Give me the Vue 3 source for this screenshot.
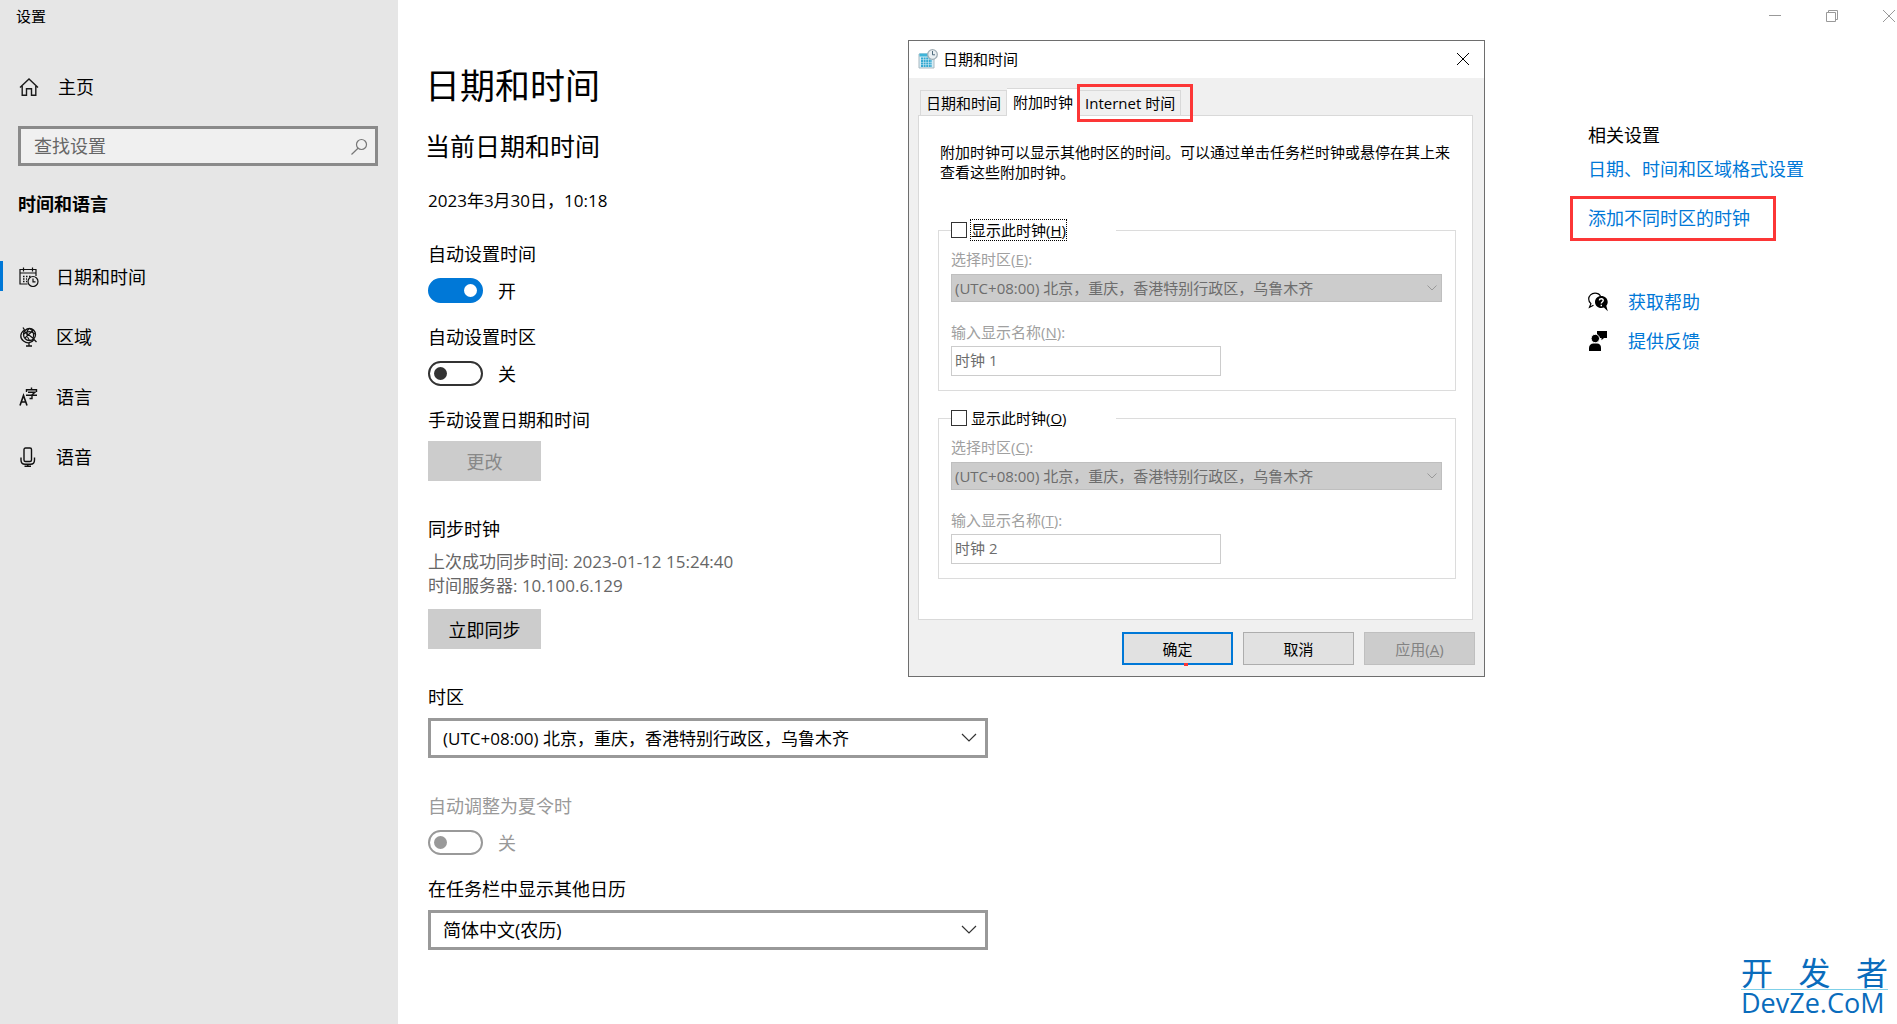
<script setup>
import { ref } from 'vue'

const navItems = [
  { id: 'datetime', label: '日期和时间', active: true },
  { id: 'region', label: '区域', active: false },
  { id: 'language', label: '语言', active: false },
  { id: 'speech', label: '语音', active: false }
]

const zone = '(UTC+08:00) 北京，重庆，香港特别行政区，乌鲁木齐'
const autoTime = ref(true)
const autoZone = ref(false)

const clocks = ref([
  { id: 1, shown: false, showKey: 'H', zoneKey: 'E', nameKey: 'N', name: '时钟 1', focused: true },
  { id: 2, shown: false, showKey: 'O', zoneKey: 'C', nameKey: 'T', name: '时钟 2', focused: false }
])
</script>

<template>
  <div class="window">
    <aside class="sidebar">
      <div class="app-name">设置</div>
      <a class="nav-link home" href="#">
        <svg class="icon" viewBox="0 0 20 20" fill="none" stroke="#1a1a1a" stroke-width="1.4">
          <path d="M1 10.500 10 2l9 8.500M3.200 9v9.300h4.300v-6.500h5v6.500h4.300V9" />
        </svg>
        <span>主页</span>
      </a>
      <div class="search">
        <input type="text" placeholder="查找设置" aria-label="查找设置" />
        <svg class="search-icon" viewBox="0 0 18 18" fill="none" stroke="#777" stroke-width="1.200">
          <circle cx="11.500" cy="6.500" r="5" />
          <path d="M8 10.200 1.500 16.500" />
        </svg>
      </div>
      <h2 class="section-name">时间和语言</h2>
      <nav class="nav">
        <a v-for="item in navItems" :key="item.id" class="nav-link" :class="{ active: item.active }" href="#">
          <svg v-if="item.id === 'datetime'" class="icon" viewBox="0 0 20 20" fill="none" stroke="#111" stroke-width="1.200">
            <path d="M8.500 17H1V2.500h16V9M1 6h16M4.500 .5v4M13.500 .5v4" />
            <path d="M4 9.500h1.500M7 9.500h1.500M10 9.500h1.500M4 12h1.500M7 12h1M4 14.500h1.500M7 14.500h1" stroke-width="1.400" />
            <circle cx="14" cy="14.500" r="5" />
            <path d="M14 11.500v3.300h2.500" />
          </svg>
          <svg v-else-if="item.id === 'region'" class="icon" viewBox="0 0 20 20" fill="none" stroke="#111" stroke-width="1.300">
            <circle cx="10.500" cy="7.500" r="6" />
            <path d="M5.500 4.500 15 12M6 11l8.500-8M10 1.500c-3.500 3.500-3 7 .5 12M11 1.500c4 3 4 6 3 10.500M5 7c3-3 7-3 11 0" stroke-width="1.100" />
            <path d="M4 .5 5.500 3C1 6 .5 11 4.500 14c4 3 8 2 10.500-1.500l2.500 2.500M10 16v3M7 19h6" />
          </svg>
          <svg v-else-if="item.id === 'language'" class="icon" viewBox="0 0 20 20" fill="none" stroke="#111" stroke-width="1.400">
            <path d="M1 18.500 4.500 8.500 8 18.500M2.300 15h4.400" stroke-width="1.600" />
            <path d="M12.500 .5v2M7.500 5V2.700h10V5M9 5.300h7l-3 2.500v3.700h-2.500M7 8.300h11" />
          </svg>
          <svg v-else class="icon" viewBox="0 0 20 20" fill="none" stroke="#111" stroke-width="1.400">
            <rect x="5" y="1" width="7.500" height="13.500" rx="1.500" />
            <path d="M2 10.500V13c0 3 1.500 4.300 4 4.300h5.500c2.500 0 4-1.300 4-4.300v-2.500M8.800 17v2.300M5.500 19.300h6.500" />
          </svg>
          <span>{{ item.label }}</span>
        </a>
      </nav>
    </aside>

    <main class="content">
      <h1>日期和时间</h1>
      <h2>当前日期和时间</h2>
      <p class="now mixed">2023年3月30日，10:18</p>

      <section class="field">
        <label for="auto-time">自动设置时间</label>
        <div class="switch-row">
          <input id="auto-time" v-model="autoTime" class="switch" type="checkbox" />
          <span>{{ autoTime ? '开' : '关' }}</span>
        </div>
      </section>
      <section class="field">
        <label for="auto-zone">自动设置时区</label>
        <div class="switch-row">
          <input id="auto-zone" v-model="autoZone" class="switch" type="checkbox" />
          <span>{{ autoZone ? '开' : '关' }}</span>
        </div>
      </section>
      <section class="field block">
        <label for="manual">手动设置日期和时间</label>
        <button id="manual" class="btn" type="button" disabled>更改</button>
      </section>
      <section class="field sync">
        <h3>同步时钟</h3>
        <p class="info mixed">上次成功同步时间: 2023-01-12 15:24:40<br />时间服务器: 10.100.6.129</p>
        <button class="btn" type="button">立即同步</button>
      </section>
      <section class="field block">
        <label for="zone">时区</label>
        <div class="select mixed">
          <select id="zone"><option>{{ zone }}</option></select>
          <svg viewBox="0 0 16 10" fill="none" stroke="#333" stroke-width="1.200"><path d="M1 1l7 7 7-7" /></svg>
        </div>
      </section>
      <section class="field muted">
        <label for="dst">自动调整为夏令时</label>
        <div class="switch-row">
          <input id="dst" class="switch" type="checkbox" disabled />
          <span>关</span>
        </div>
      </section>
      <section class="field">
        <label for="calendar">在任务栏中显示其他日历</label>
        <div class="select">
          <select id="calendar"><option>简体中文(农历)</option></select>
          <svg viewBox="0 0 16 10" fill="none" stroke="#333" stroke-width="1.200"><path d="M1 1l7 7 7-7" /></svg>
        </div>
      </section>
    </main>

    <aside class="related">
      <h3>相关设置</h3>
      <a href="#">日期、时间和区域格式设置</a>
      <a class="marked" href="#">添加不同时区的时钟</a>
      <a class="support" href="#">
        <svg class="icon" viewBox="0 0 20 20">
          <path d="M7 1.200C3.500 1.200 .7 3.700 .7 7c0 2 .9 3.500 2.200 4.600L1.500 15.200l4-2M12.500 4.200C11.500 2.300 9.500 1.200 7 1.200" fill="none" stroke="#000" stroke-width="1.200" />
          <path d="M13.300 4C9.700 4 7 6.600 7 10s2.700 6 6.300 6c.9 0 1.800-.2 2.600-.5l3.900 3.700-1.500-5.500c.9-1 1.400-2.300 1.400-3.700C19.700 6.600 16.900 4 13.300 4z" fill="#000" />
          <path d="M11.300 8.300c.3-2.200 4-2 3.900.2-.1 1.500-1.900 1.500-1.900 3M13.300 12.800v1.400" fill="none" stroke="#fff" stroke-width="1.400" />
        </svg>
        <span>获取帮助</span>
      </a>
      <a class="support" href="#">
        <svg class="icon" viewBox="0 0 20 20">
          <path d="M9 0h10v7h-3l-2.500 2.200V7H9z" />
          <circle cx="7.300" cy="7.500" r="4.200" stroke="#fff" />
          <path d="M1 20v-3c0-3 2-4.500 4.500-4.500h3.500c2.500 0 4 1.500 4 4.500v3z" />
        </svg>
        <span>提供反馈</span>
      </a>
    </aside>

    <div class="caption-buttons">
      <button type="button" aria-label="最小化">
        <svg viewBox="0 0 12 12"><path d="M0 5.500h12" /></svg>
      </button>
      <button type="button" aria-label="还原">
        <svg viewBox="0 0 12 12"><path d="M.5 2.500h9v9h-9zM2.500 2.500v-2h9v9h-2" /></svg>
      </button>
      <button type="button" aria-label="关闭">
        <svg viewBox="0 0 12 12"><path d="M0 0l12 12M12 0 0 12" /></svg>
      </button>
    </div>

    <div class="dialog" role="dialog" aria-labelledby="dialog-title">
      <header class="dialog-bar">
        <svg class="dialog-icon" viewBox="0 0 20 20">
          <path d="M1 5h15v14H1z" fill="#d5edf6" stroke="#a9b9c1" />
          <path d="M1.500 4.500h10v3h-10z" fill="#3fb4d8" />
          <path d="M3 9.500h10M3 12h11M3 14.500h11M3 17h11" stroke="#35a9d1" stroke-width="2" stroke-dasharray="2 .6" />
          <circle cx="14.500" cy="5.500" r="4.800" fill="#e9eff2" stroke="#9fadb5" stroke-width="1.300" />
          <path d="M14.500 2v3.800H17" fill="none" stroke="#4d6a7c" />
        </svg>
        <span id="dialog-title">日期和时间</span>
        <button class="dialog-close" type="button" aria-label="关闭">
          <svg viewBox="0 0 12 12"><path d="M0 0l12 12M12 0 0 12" /></svg>
        </button>
      </header>

      <div class="tabs" role="tablist">
        <button class="tab" type="button" role="tab">日期和时间</button>
        <button class="tab selected" type="button" role="tab" aria-selected="true">附加时钟</button>
        <button class="tab framed" type="button" role="tab">Internet 时间</button>
      </div>

      <div class="page">
        <p class="hint">附加时钟可以显示其他时区的时间。可以通过单击任务栏时钟或悬停在其上来查看这些附加时钟。</p>
        <fieldset v-for="clock in clocks" :key="clock.id" class="clock">
          <legend>
            <input :id="'show' + clock.id" v-model="clock.shown" type="checkbox" />
            <label :for="'show' + clock.id" :class="{ focused: clock.focused }">显示此时钟(<u>{{ clock.showKey }}</u>)</label>
          </legend>
          <label class="dim" :for="'zone' + clock.id">选择时区(<u>{{ clock.zoneKey }}</u>):</label>
          <div class="zone-select">
            <select :id="'zone' + clock.id" disabled><option>{{ zone }}</option></select>
            <svg viewBox="0 0 10 6" fill="none" stroke="#999"><path d="M.5 .5 5 5 9.500 .5" /></svg>
          </div>
          <label class="dim" :for="'name' + clock.id">输入显示名称(<u>{{ clock.nameKey }}</u>):</label>
          <input :id="'name' + clock.id" class="name" type="text" :value="clock.name" disabled />
        </fieldset>
      </div>

      <footer class="actions">
        <button class="primary" type="button">确定</button>
        <button type="button">取消</button>
        <button type="button" disabled>应用(<u>A</u>)</button>
      </footer>
    </div>

    <div class="watermark">
      <div class="watermark-top"><span>开</span><span>发</span><span>者</span></div>
      <div class="watermark-site">DevZe.CoM</div>
    </div>
  </div>
</template>

<style>
body {
  margin: 0;
  background: #fff;
}
</style>

<style scoped>
.window,
.window button,
.window input,
.window select {
  font-family: "Open Sans", "Noto Sans CJK SC", sans-serif;
}
.window {
  position: relative;
  display: flex;
  min-height: 100vh;
  overflow: hidden;
  font-size: 18px;
  line-height: 24px;
  color: #000;
}
.window * {
  box-sizing: border-box;
}
h1,
h2,
h3,
p {
  margin: 0;
  font-weight: inherit;
}
h3 {
  font-size: 18px;
}
a {
  color: #0078d7;
  text-decoration: none;
}
button,
input,
select {
  margin: 0;
  border-radius: 0;
  font-weight: inherit;
  color: inherit;
}
.icon {
  width: 20px;
  height: 20px;
  flex: none;
}
.mixed,
.mixed select {
  font-size: 17px;
}

/* Sidebar */
.sidebar {
  width: 398px;
  flex: none;
  background: #e6e6e6;
}
.app-name {
  padding: 4px 16px;
  font-size: 15px;
}
.nav-link {
  display: flex;
  align-items: center;
  gap: 17px;
  height: 60px;
  padding-left: 19px;
  color: #000;
}
.home {
  gap: 19px;
  margin-top: 25px;
}
.search {
  position: relative;
  margin: 9px 20px 0 18px;
}
.search input {
  display: block;
  width: 100%;
  height: 40px;
  padding: 0 40px 0 13px;
  border: 3px solid #8a8a8a;
  background: #f0f0f0;
  font-size: 18px;
}
.search input::placeholder {
  color: #666;
  opacity: 1;
}
.search-icon {
  position: absolute;
  right: 10px;
  top: 12px;
  width: 18px;
  height: 18px;
}
.section-name {
  margin: 26px 18px 0;
  font-size: 18px;
  line-height: 24px;
  font-weight: 700;
}
.nav {
  margin-top: 31px;
}
.active {
  position: relative;
}
.active::before {
  content: "";
  position: absolute;
  left: 0;
  top: 14px;
  width: 3px;
  height: 30px;
  background: #0078d7;
}

/* Main column */
.content {
  flex: 1;
  padding: 62px 30px 20px;
}
h1 {
  font-size: 35px;
  line-height: 48px;
}
h1,
.content h2 {
  margin-left: -3px;
}
.content h2 {
  margin-top: 20px;
  font-size: 25px;
  line-height: 32px;
}
.now {
  margin: 27px 0 29px;
}
.field {
  margin-bottom: 22px;
}
.field > label {
  display: block;
}
.switch-row {
  display: flex;
  align-items: center;
  gap: 15px;
  height: 25px;
  margin-top: 12px;
}
.switch {
  display: flex;
  align-items: center;
  appearance: none;
  width: 55px;
  height: 25px;
  padding: 0 4px;
  border: 2px solid #333;
  border-radius: 13px;
  color: #333;
}
.switch::before {
  content: "";
  width: 13px;
  height: 13px;
  border-radius: 50%;
  background: currentColor;
}
.switch:checked {
  justify-content: flex-end;
  border-color: #0078d7;
  background: #0078d7;
  color: #fff;
}
.switch:disabled {
  border-color: #999;
  color: #999;
}
.muted {
  color: #999;
}
.block {
  margin-bottom: 36px;
}
.btn {
  display: block;
  width: 113px;
  height: 40px;
  margin-top: 9px;
  padding: 0;
  border: 0;
  background: #ccc;
  font-size: 18px;
}
.btn:disabled {
  color: #888;
}
.sync {
  margin: 0 0 36px;
}
.info {
  margin: 9px 0 11px;
  color: #666;
}
.select {
  position: relative;
  max-width: 560px;
  margin-top: 9px;
}
.select select {
  appearance: none;
  display: block;
  width: 100%;
  height: 40px;
  padding: 0 40px 0 12px;
  border: 3px solid #999;
  background: #fff;
}
.select:not(.mixed) select {
  font-size: 18px;
}
.select svg {
  position: absolute;
  right: 11px;
  top: 15px;
  width: 16px;
  height: 10px;
}

/* Related links */
.related {
  display: flex;
  flex-direction: column;
  align-items: flex-start;
  width: 327px;
  flex: none;
  padding: 123px 0 0 18px;
}
.related a {
  margin-top: 10px;
}
.related .marked {
  width: 206px;
  margin: 15px 0 38px -18px;
  padding: 7px 15px 8px;
  border: 3px solid #fc3636;
}
.related .support {
  display: flex;
  align-items: center;
  gap: 20px;
  margin: 11px 0 4px;
}

.caption-buttons {
  position: absolute;
  top: 0;
  right: 2px;
  display: flex;
  gap: 45px;
  padding-top: 10px;
}
.caption-buttons button,
.dialog-close {
  display: block;
  padding: 0;
  border: 0;
  background: none;
}
.caption-buttons svg,
.dialog-close svg {
  display: block;
  width: 12px;
  height: 12px;
  fill: none;
  stroke: #999;
}
.dialog-close svg {
  stroke: #000;
}

/* Dialog */
.dialog {
  position: absolute;
  left: 908px;
  top: 40px;
  width: 577px;
  padding: 0 9px 11px;
  border: 1px solid #6e6e6e;
  background: #f0f0f0;
  font-size: 15px;
  line-height: 20px;
}
.dialog-bar {
  display: flex;
  align-items: center;
  gap: 5px;
  height: 37px;
  margin: 0 -9px;
  padding: 0 15px 2px 9px;
  background: #fff;
}
.dialog-icon {
  width: 20px;
  height: 20px;
}
.dialog-close {
  margin-left: auto;
}
.tabs {
  display: flex;
  align-items: flex-end;
  margin-top: 10px;
  padding-left: 2px;
}
.tab {
  height: 25px;
  padding: 0 5px;
  border: 1px solid #d9d9d9;
  border-bottom: 0;
  background: #f0f0f0;
  font-size: 15px;
  line-height: 20px;
  white-space: nowrap;
}
.tab + .tab {
  border-left: 0;
}
.selected {
  position: relative;
  height: 28px;
  margin-bottom: -1px;
  padding: 0 6px 2px;
  background: #fff;
}
.framed {
  position: relative;
}
.framed::after {
  content: "";
  position: absolute;
  inset: -7px -13px -7px -3px;
  border: 3px solid #fc3636;
}
.page {
  margin-right: 2px;
  padding: 26px 16px 40px 19px;
  border: 1px solid #d9d9d9;
  background: #fff;
}
.hint {
  padding-left: 2px;
}
.clock {
  display: flex;
  flex-direction: column;
  align-items: flex-start;
  min-width: 0;
  margin: 37px 0 0;
  padding: 8px 13px 14px 12px;
  border: 1px solid #dcdcdc;
}
.clock + .clock {
  margin-top: 16px;
}
legend {
  display: flex;
  align-items: center;
  gap: 3px;
  width: 165px;
  padding: 0;
}
legend input {
  appearance: none;
  width: 16px;
  height: 16px;
  border: 1px solid #333;
  background: #fff;
}
legend label {
  border: 1px dotted transparent;
}
legend .focused {
  border-color: #000;
}
.dim {
  color: #a0a0a0;
}
.zone-select {
  position: relative;
  width: 100%;
  margin: 5px 0 20px;
}
.zone-select select {
  appearance: none;
  display: block;
  width: 100%;
  height: 28px;
  padding: 0 24px 0 3px;
  border: 1px solid #bfbfbf;
  background: #ccc;
  color: #6d6d6d;
  font-size: 15px;
  opacity: 1;
}
.zone-select svg {
  position: absolute;
  right: 5px;
  top: 11px;
  width: 10px;
  height: 6px;
}
.name {
  width: 270px;
  height: 30px;
  margin-top: 4px;
  padding: 0 3px 3px;
  border: 1px solid #ccc;
  background: #fff;
  color: #6d6d6d;
  font-size: 15px;
}
.actions {
  display: flex;
  justify-content: flex-end;
  gap: 10px;
  margin-top: 12px;
}
.actions button {
  width: 111px;
  height: 33px;
  padding: 0;
  border: 1px solid #adadad;
  background: #e1e1e1;
  font-size: 15px;
}
.actions .primary {
  position: relative;
  border: 2px solid #0078d7;
}
.primary::after {
  content: "";
  position: absolute;
  left: 60px;
  bottom: -3px;
  width: 4px;
  height: 3px;
  background: #fc3636;
}
.actions button:disabled {
  border-color: #bfbfbf;
  background: #ccc;
  color: #838383;
}

.watermark {
  position: absolute;
  right: 9px;
  bottom: 9px;
  width: 147px;
  color: #0a6cbc;
}
.watermark-top {
  display: flex;
  justify-content: space-between;
  border-bottom: 1px solid #7fd0e8;
  font-size: 32px;
  line-height: 32px;
}
.watermark-site {
  font-size: 27px;
  line-height: 25px;
}
</style>
